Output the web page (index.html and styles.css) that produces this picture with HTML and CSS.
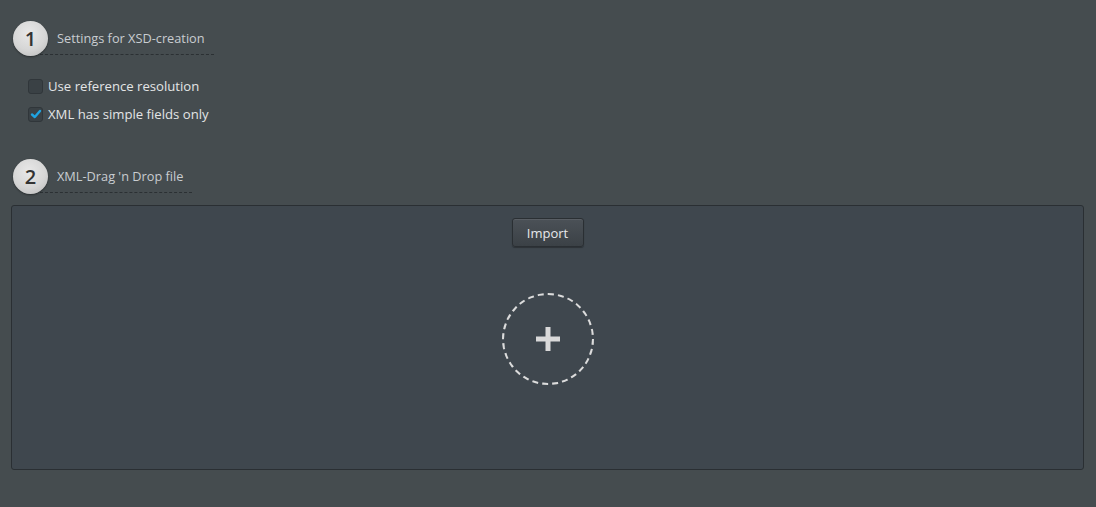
FILE: index.html
```html
<!DOCTYPE html>
<html>
<head>
<meta charset="utf-8">
<link rel="stylesheet" href="styles.css">
</head>
<body>
<div class="page">
  <div class="step">
    <div class="badge">1</div>
    <div class="step-title">Settings for XSD-creation</div>
  </div>
  <div class="options">
    <label class="check"><span class="box"></span><span>Use reference resolution</span></label>
    <label class="check"><span class="box checked"><svg width="12" height="12" viewBox="0 0 12 12"><path d="M2 6.5 L4.8 9 L10 3" fill="none" stroke="#1fa3e0" stroke-width="2.4" stroke-linecap="round" stroke-linejoin="round"/></svg></span><span>XML has simple fields only</span></label>
  </div>
  <div class="step step2">
    <div class="badge">2</div>
    <div class="step-title">XML-Drag 'n Drop file</div>
  </div>
  <div class="dropzone">
    <button class="import">Import</button>
    <div class="drop-circle">
      <svg width="28" height="28" viewBox="0 0 28 28"><path d="M14 2 V26 M2 14 H26" stroke="#d9d9d9" stroke-width="5"/></svg>
    </div>
  </div>
</div>
</body>
</html>
```
FILE: styles.css
```css
html, body {
  margin: 0;
  padding: 0;
  background: #454c4f;
  font-family: "Open Sans", "Noto Sans", sans-serif;
  height: 100%;
}
.page {
  padding: 20px 12px 0 11px;
  width: 1073px;
}
.step {
  display: flex;
  align-items: center;
  padding-left: 2px;
  height: 36px;
}
.badge {
  width: 35px;
  height: 35px;
  border-radius: 50%;
  background: radial-gradient(circle at 45% 35%, #e8e8e8 0%, #d6d6d6 55%, #b8b8b8 100%);
  box-shadow: 0 1px 2px rgba(0,0,0,0.4);
  color: #333;
  font-size: 20px;
  font-weight: 600;
  display: flex;
  align-items: center;
  justify-content: center;
  position: relative;
  z-index: 1;
}
.step-title {
  color: #c9cdd1;
  font-size: 12.75px;
  margin-left: -8px;
  padding: 0 9px 7px 17px;
  margin-top: 7px;
  border-bottom: 1px dashed #2b3033;
  line-height: 18px;
}
.options {
  display: flex;
  flex-direction: column;
  gap: 10px;
  padding: 21px 0 0 17px;
}
.check {
  display: flex;
  align-items: center;
  gap: 5px;
  color: #e3e5e6;
  font-size: 13.15px;
  line-height: 18px;
}
.box {
  width: 13px;
  height: 13px;
  border-radius: 3px;
  background: #3a4145;
  border: 1px solid #30363a;
  display: flex;
  align-items: center;
  justify-content: center;
}
.step2 {
  margin-top: 35px;
}
.dropzone {
  margin-top: 11px;
  height: 263px;
  background: #3f474e;
  border: 1px solid #2a2f33;
  border-radius: 3px;
  display: flex;
  flex-direction: column;
  align-items: center;
}
.import {
  margin-top: 12px;
  width: 72px;
  height: 29px;
  border-radius: 3px;
  border: 1px solid #2a2f33;
  background: linear-gradient(#4b5157, #3b4146);
  color: #e6e8ea;
  font-family: "Open Sans", "Noto Sans", sans-serif;
  font-size: 13px;
  box-shadow: 0 1px 1px rgba(0,0,0,0.3), inset 0 1px 0 rgba(255,255,255,0.08);
}
.drop-circle {
  margin-top: 46px;
  width: 88px;
  height: 88px;
  border: 2px dashed #dcdcdc;
  border-radius: 50%;
  display: flex;
  align-items: center;
  justify-content: center;
}
```
